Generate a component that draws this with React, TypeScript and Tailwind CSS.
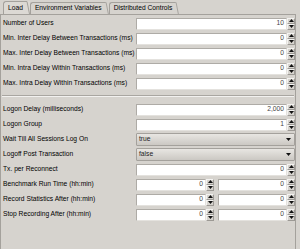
import type { ReactNode } from 'react'

const font = { fontFamily: '"Liberation Sans", Arial, sans-serif' }

function Arrow({ up }: { up?: boolean }) {
  return (
    <svg width="5" height="3" viewBox="0 0 5 3" className="block">
      <path d={up ? 'M0 3 L2.5 0 L5 3 Z' : 'M0 0 L5 0 L2.5 3 Z'} fill="#111" />
    </svg>
  )
}

function Spinner() {
  return (
    <div className="flex h-[12px] w-[8px] shrink-0 flex-col">
      <div className="flex h-[6px] items-center justify-center border border-[#f4f3f1] border-b-[#9c9994] border-r-[#9c9994] bg-[#d6d3ce]">
        <Arrow up />
      </div>
      <div className="flex h-[6px] items-center justify-center border border-[#f4f3f1] border-b-[#9c9994] border-r-[#9c9994] bg-[#d6d3ce]">
        <Arrow />
      </div>
    </div>
  )
}

function NumField({ value, className }: { value: string; className: string }) {
  return (
    <div className={`flex items-center ${className}`}>
      <div className="flex h-[12px] flex-1 items-center justify-end border border-[#aeaba6] border-b-[#e4e2de] border-r-[#e4e2de] bg-white pr-[2px] text-[6.7px] leading-none text-[#444]">
        {value}
      </div>
      <Spinner />
    </div>
  )
}

function Select({ value }: { value: string }) {
  return (
    <div className="flex h-[13px] w-[159px] items-center justify-between rounded-[1px] border border-[#a4a19c] bg-gradient-to-b from-[#e8e6e2] to-[#cbc8c3] pl-[2px] pr-[3px] text-[6.7px] leading-none text-[#222]">
      <span>{value}</span>
      <Arrow />
    </div>
  )
}

function Row({ label, children }: { label: string; children: ReactNode }) {
  return (
    <div className="flex h-[15px] items-center">
      <div className="w-[134px] shrink-0 whitespace-nowrap pl-[1px] text-[6.7px] leading-none text-black">{label}</div>
      {children}
    </div>
  )
}

function Tab({ label, active }: { label: string; active?: boolean }) {
  return (
    <div className={`relative flex items-center ${active ? 'h-[13px] bg-[#dcd9d4]' : 'h-[12px]'}`}>
      <div className="flex h-full items-center whitespace-nowrap rounded-tl-[3px] border-l border-t border-[#a4a19c] pl-[4px] pr-[3px] text-[6.7px] leading-none text-black">
        {label}
      </div>
      <svg width="4" height="13" viewBox="0 0 4 13" className="block h-full">
        <path d="M0 0.5 L1 0.5 L3.5 13" stroke="#a4a19c" fill="none" strokeWidth="1" />
      </svg>
    </div>
  )
}

export default function App() {
  const top = [
    ['Number of Users', '10'],
    ['Min. Inter Delay Between Transactions (ms)', '0'],
    ['Max. Inter Delay Between Transactions (ms)', '0'],
    ['Min. Intra Delay Within Transactions (ms)', '0'],
    ['Max. Intra Delay Within Transactions (ms)', '0'],
  ]
  const times = ['Benchmark Run Time (hh:min)', 'Record Statistics After (hh:min)', 'Stop Recording After (hh:min)']

  return (
    <div className="h-[249px] w-[300px] overflow-hidden bg-[#d6d3ce]" style={font}>
      <div className="flex h-[14px] items-end pl-[3px]">
        <Tab label="Load" active />
        <Tab label="Environment Variables" />
        <Tab label="Distributed Controls" />
      </div>
      <div className="flex h-[235px] w-[296px] flex-col border-l border-r border-t border-[#a4a19c] pl-[1px] pt-[1px]">
        {top.map(([l, v]) => (
          <Row key={l} label={l}>
            <NumField value={v} className="w-[159px]" />
          </Row>
        ))}
        <div className="mr-[1px] mt-[4px] mb-[5px] border-t border-b border-t-[#a9a6a1] border-b-[#f2f1ef]" />
        <Row label="Logon Delay (milliseconds)">
          <NumField value="2,000" className="w-[159px]" />
        </Row>
        <Row label="Logon Group">
          <NumField value="1" className="w-[159px]" />
        </Row>
        <Row label="Wait Till All Sessions Log On">
          <Select value="true" />
        </Row>
        <Row label="Logoff Post Transaction">
          <Select value="false" />
        </Row>
        <Row label="Tx. per Reconnect">
          <NumField value="0" className="w-[159px]" />
        </Row>
        {times.map((l) => (
          <Row key={l} label={l}>
            <div className="flex w-[159px] gap-[4px]">
              <NumField value="0" className="w-[78px]" />
              <NumField value="0" className="w-[77px]" />
            </div>
          </Row>
        ))}
      </div>
    </div>
  )
}
